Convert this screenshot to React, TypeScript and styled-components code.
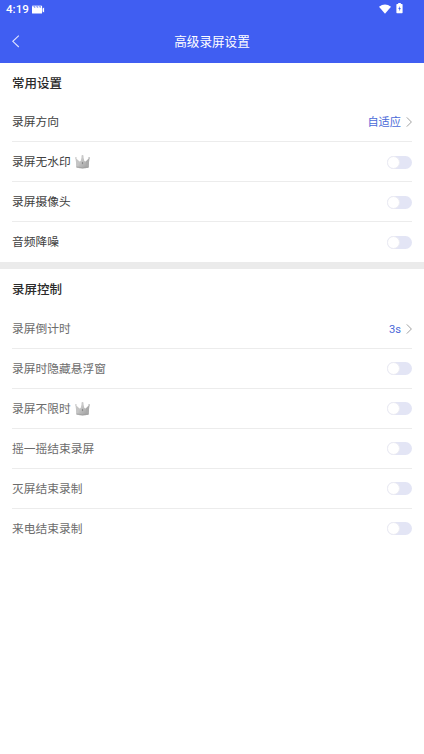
import React from 'react';
import styled, { createGlobalStyle } from 'styled-components';

const GlobalStyle = createGlobalStyle`
  * { box-sizing: border-box; }
  body { margin: 0; background: #fff; font-family: Roboto, "Noto Sans CJK SC", sans-serif; }
`;

const Screen = styled.main`
  width: 100%;
  min-height: 754px;
  background: #fff;
`;

const Header = styled.header`
  height: 63px;
  background: #405ef2;
  color: #fff;
`;

const StatusBar = styled.div`
  height: 19px;
  display: flex;
  align-items: center;
  justify-content: space-between;
  padding: 0 21px 0 6px;
`;

const StatusGroup = styled.div<{ $gap: number; $raise?: number }>`
  display: flex;
  align-items: center;
  gap: ${(p) => p.$gap}px;
  padding-bottom: ${(p) => p.$raise ?? 0}px;
`;

const Clock = styled.span`
  font-size: 11.6px;
  font-weight: 500;
  line-height: 19px;
`;

const NavBar = styled.nav`
  height: 44px;
  display: grid;
  grid-template-columns: 40px 1fr 40px;
  align-items: center;
`;

const BackButton = styled.button`
  height: 44px;
  padding: 0 0 0 11px;
  border: 0;
  background: none;
  display: flex;
  align-items: center;
`;

const PageTitle = styled.h1`
  margin: 0;
  padding-top: 1px;
  font-size: 12.6px;
  font-weight: 400;
  line-height: 43px;
  text-align: center;
`;

const Section = styled.section`
  padding: 0 12px;
`;

const SectionTitle = styled.h2<{ $height: number }>`
  margin: 0;
  height: ${(p) => p.$height}px;
  padding-top: 1px;
  line-height: ${(p) => p.$height}px;
  font-size: 12.5px;
  font-weight: 500;
  color: #2b2b2b;
`;

const Row = styled.div<{ $muted?: boolean }>`
  height: 40px;
  display: flex;
  align-items: center;
  justify-content: space-between;
  color: ${(p) => (p.$muted ? '#6c6c6c' : '#404040')};
  border-bottom: 1px solid #ececec;
  &:last-child { border-bottom-color: transparent; }
`;

const Label = styled.span`
  display: flex;
  align-items: center;
  gap: 4px;
  font-size: 11.75px;
  line-height: 18px;
`;

const Value = styled.span`
  display: flex;
  align-items: center;
  gap: 5px;
  color: #4a69d8;
`;

const ValueText = styled.span`
  padding-top: 2px;
  font-size: 11.2px;
  line-height: 18px;
`;

const Divider = styled.div`
  height: 7px;
  background: #ebebeb;
`;

const Toggle = styled.button<{ $drop: number }>`
  width: 25px;
  height: 13px;
  margin-top: ${(p) => p.$drop}px;
  padding: 0;
  border: 0;
  border-radius: 7px;
  background: #e3e5f5;
  display: flex;
  align-items: center;
`;

const Knob = styled.span`
  width: 13px;
  height: 13px;
  border-radius: 50%;
  background: #fff;
  border: 1px solid #ececf3;
`;

const RecordIcon = () => (
  <svg width="13" height="9" viewBox="0 0 13 9">
    <path d="M0 1.2h1.3l.8 1.3h1.4l-.8-1.3h1.4L5 2.500h1.4l-.8-1.3H7l.8 1.3h1.1V.8h.6q.6 0 .6.6V8q0 .6-.6.6H.7Q0 8.600 0 8z" fill="#fff" />
    <path d="M.3.4h9v1.300h-9z" fill="#fff" opacity=".6" />
    <path d="M10.600 3.500 12.100 2.500v5l-1.500-1z" fill="#fff" />
  </svg>
);

const WifiIcon = () => (
  <svg width="12" height="10" viewBox="0 0 12 10">
    <path d="M0 2.700Q6-1.800 12 2.700L6 9.800z" fill="#fff" />
  </svg>
);

const BatteryIcon = () => (
  <svg width="7" height="11" viewBox="0 0 7 11">
    <path d="M2.200 0h2.600v1H6q.6 0 .6.800v7.700q0 .8-.6.8H1q-.6 0-.6-.8V1.800Q.4 1 1 1h1.200z" fill="#fff" />
    <path d="M3.700 3 2.300 6.100h1v2.200l1.500-3.200H3.700z" fill="#405ef2" />
  </svg>
);

const BackIcon = () => (
  <svg width="9" height="13" viewBox="0 0 9 13" fill="none">
    <path d="M7.800.6 1.800 6.300l6 5.700" stroke="#dfe4ff" strokeWidth="1.100" />
  </svg>
);

const ChevronIcon = () => (
  <svg width="6" height="10" viewBox="0 0 6 10" fill="none">
    <path d="M.8.4 5.400 5 .8 9.600" stroke="#a0a0a0" strokeWidth="1" />
  </svg>
);

const CrownIcon = () => (
  <svg width="15" height="15" viewBox="0 0 15 15">
    <defs>
      <linearGradient id="silver" x1="0" x2="1" y1="0" y2="1">
        <stop offset="0" stopColor="#dedede" />
        <stop offset=".5" stopColor="#bdbdbd" />
        <stop offset="1" stopColor="#999" />
      </linearGradient>
    </defs>
    <path d="M.6 4 4.300 7.500 5.700 7 6.700 2.200h1.600l1 4.800 1.500.5L14.400 4l-.9 9.500q-6 1.800-12 0z" fill="url(#silver)" />
    <path d="M.6 4 4.300 7.500 3.200 13.900l-1.700-.4z" fill="#c5c5c5" />
    <path d="M10.800 7.500 14.400 4l-.9 9.500-2.200.5z" fill="#aaa" />
    <circle cx=".9" cy="3.900" r=".8" fill="#c8c8c8" />
    <circle cx="7.500" cy="2" r="1" fill="#c8c8c8" />
    <circle cx="14.100" cy="3.900" r=".8" fill="#b5b5b5" />
    <path d="m7.500 7.800.8 1.300-.8 1.300-.8-1.300z" fill="#858585" />
    <path d="M1.600 12.900q5.900 1.800 11.800 0" stroke="#a0a0a0" strokeWidth=".8" fill="none" />
  </svg>
);

type Setting = { label: string; value?: string; premium?: boolean };

const common: Setting[] = [
  { label: '录屏方向', value: '自适应' },
  { label: '录屏无水印', premium: true },
  { label: '录屏摄像头' },
  { label: '音频降噪' },
];

const control: Setting[] = [
  { label: '录屏倒计时', value: '3s' },
  { label: '录屏时隐藏悬浮窗' },
  { label: '录屏不限时', premium: true },
  { label: '摇一摇结束录屏' },
  { label: '灭屏结束录制' },
  { label: '来电结束录制' },
];

const SettingRow = ({ item, muted }: { item: Setting; muted?: boolean }) => (
  <Row $muted={muted}>
    <Label>
      {item.label}
      {item.premium && <CrownIcon />}
    </Label>
    {item.value ? (
      <Value>
        <ValueText>{item.value}</ValueText>
        <ChevronIcon />
      </Value>
    ) : (
      <Toggle $drop={muted ? 0 : 1} role="switch" aria-checked={false} aria-label={item.label}>
        <Knob />
      </Toggle>
    )}
  </Row>
);

export default function App() {
  return (
    <Screen>
      <GlobalStyle />
      <Header>
        <StatusBar>
          <StatusGroup $gap={3}>
            <Clock>4:19</Clock>
            <RecordIcon />
          </StatusGroup>
          <StatusGroup $gap={5} $raise={2}>
            <WifiIcon />
            <BatteryIcon />
          </StatusGroup>
        </StatusBar>
        <NavBar>
          <BackButton aria-label="返回">
            <BackIcon />
          </BackButton>
          <PageTitle>高级录屏设置</PageTitle>
        </NavBar>
      </Header>
      <Section>
        <SectionTitle $height={39}>常用设置</SectionTitle>
        {common.map((s) => (
          <SettingRow key={s.label} item={s} />
        ))}
      </Section>
      <Divider />
      <Section>
        <SectionTitle $height={40}>录屏控制</SectionTitle>
        {control.map((s) => (
          <SettingRow key={s.label} item={s} muted />
        ))}
      </Section>
    </Screen>
  );
}
